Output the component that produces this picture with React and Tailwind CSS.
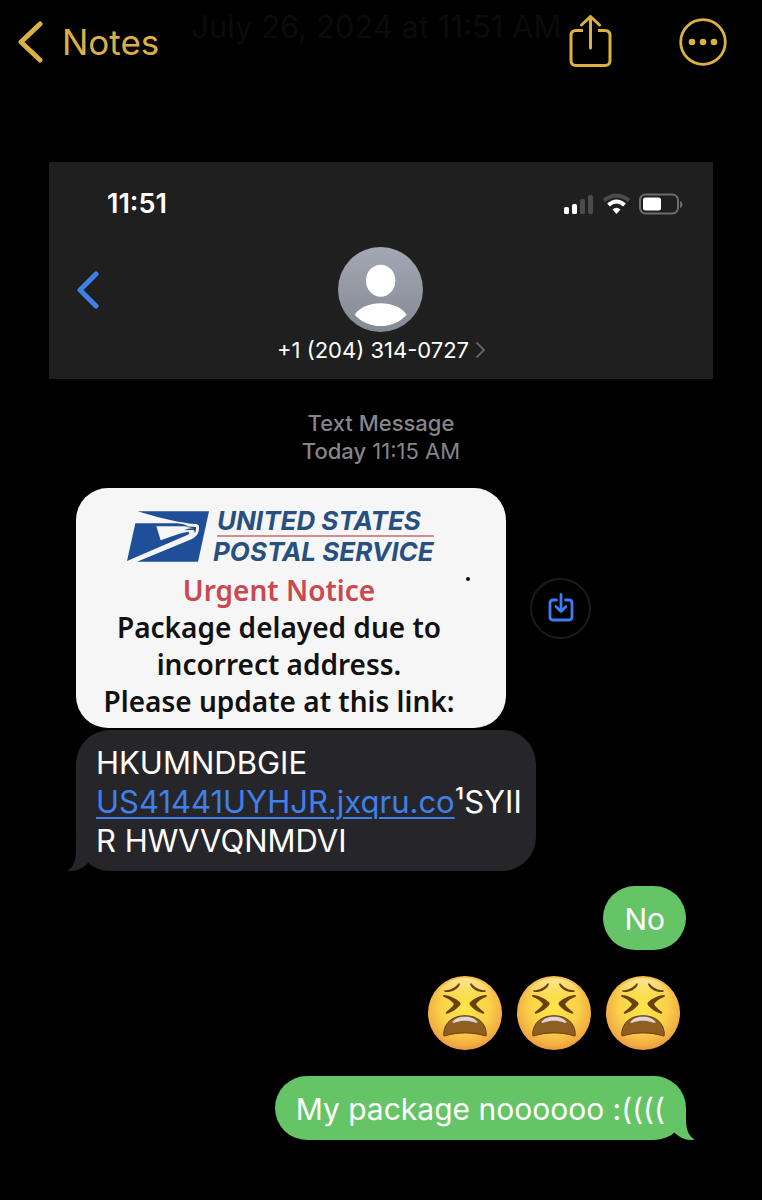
import React from "react";

function Tail({ className }) {
  return (
    <svg viewBox="0 0 30 41" className={"absolute bottom-0 h-[41px] w-[30px] " + className} aria-hidden="true">
      <path d="M9 10V20C9 31 6 38 0 40.500C8 42 15 39 20 34L30 22V10Z" fill="currentColor" />
    </svg>
  );
}

function Emoji({ id }) {
  return (
    <svg viewBox="0 0 222 222" className="size-[74px]" role="img" aria-label="tired face">
      <defs>
        <radialGradient id={id} cx="50%" cy="42%" r="60%">
          <stop offset="0" stopColor="#fbe64a" />
          <stop offset="0.55" stopColor="#fad248" />
          <stop offset="0.85" stopColor="#f2ae43" />
          <stop offset="1" stopColor="#e8943c" />
        </radialGradient>
        <linearGradient id={id + "s"} x1="0" y1="0" x2="0" y2="1">
          <stop offset="0" stopColor="#fff9d0" stopOpacity="0.6" />
          <stop offset="0.4" stopColor="#fff3a0" stopOpacity="0" />
        </linearGradient>
      </defs>
      <circle cx="111" cy="111" r="111" fill={"url(#" + id + ")"} />
      <ellipse cx="111" cy="80" rx="88" ry="74" fill={"url(#" + id + "s)"} />
      <g fill="#6b400f">
        <path d="M50 43C67 42 82 34 91 23C94 20 97 23 95 27C88 41 69 50 52 48C48 47 47 44 50 43Z" />
        <path d="M172 43C155 42 140 34 131 23C128 20 125 23 127 27C134 41 153 50 170 48C174 47 175 44 172 43Z" />
        <path d="M48 57C66 59 84 67 96 79Q100 83 96 88C86 100 72 109 57 113C53 114 52 110 55 107C66 99 74 92 78 84C70 74 60 68 48 63C44 61 44 57 48 57Z" />
        <path d="M174 57C156 59 138 67 126 79Q122 83 126 88C136 100 150 109 165 113C169 114 170 110 167 107C156 99 148 92 144 84C152 74 162 68 174 63C178 61 178 57 174 57Z" />
      </g>
      <path d="M47 176C47 142 72 119 111 119C150 119 175 142 175 176C176 180 173 181 169 179C135 168 87 168 53 179C49 181 46 180 47 176Z" fill="#8e5f20" stroke="#6b400f" strokeWidth="3" />
      <path d="M72 139C82 127 94 122 111 122C128 122 140 127 150 139C143 143 134 134 111 134C88 134 79 143 72 139Z" fill="#dcd5df" />
    </svg>
  );
}

function EagleLogo() {
  return (
    <svg viewBox="0 0 246 153" className="h-[51px] w-[82px] shrink-0" aria-hidden="true">
      <path d="M32 1H246L213 152H30L186 88Q205 80 212 69Q218 55 216 44Q213 37 190 38C135 31 85 17 32 1Z" fill="#1f4f98" />
      <path d="M25 37H150Q172 39 184 46H88L101 88Q158 66 184 62Q190 66 181 72L0 150Z" fill="#1f4f98" />
      <path d="M172 47Q190 45 207 48V54Q206 64 203 67Q204 58 199 57Q186 56 172 58Q187 49 203 53Q190 48 172 47Z" fill="#26496f" />
    </svg>
  );
}

export default function App() {
  return (
    <div className="min-h-screen bg-black pb-[60px] font-['Inter','Noto_Sans',sans-serif] text-white">
      <header className="flex h-[84px] items-center pl-4 pr-[35px] text-[#dcb144]">
        <button type="button" className="flex items-center gap-4 text-[35px] leading-[42px]">
          <svg viewBox="0 0 30 42" className="h-[42px] w-[30px]" fill="none" stroke="currentColor" strokeWidth="5" strokeLinecap="round" strokeLinejoin="round" aria-hidden="true">
            <path d="M24 3L5 21L24 39" />
          </svg>
          Notes
        </button>
        <h1 className="ml-8 flex-1 self-start whitespace-nowrap pt-1 text-[31px] leading-[46px] text-[#0b0b0b]">July 26, 2024 at 11:51 AM</h1>
        <button type="button" aria-label="Share" className="mr-[67px] shrink-0">
          <svg viewBox="0 0 44 54" className="h-[54px] w-11" fill="none" stroke="currentColor" strokeWidth="3" strokeLinecap="round" strokeLinejoin="round" aria-hidden="true">
            <path d="M15 15.500H8Q3 15.500 3 20.500V45.500Q3 50.500 8 50.500H37Q42 50.500 42 45.500V20.500Q42 15.500 37 15.500H30" strokeLinecap="butt" />
            <path d="M22.500 33V1.500M13.500 10L22.500 1.500L31.500 10" />
          </svg>
        </button>
        <button type="button" aria-label="More" className="shrink-0">
          <svg viewBox="0 0 48 48" className="size-12" aria-hidden="true">
            <circle cx="24" cy="24" r="22.300" fill="none" stroke="currentColor" strokeWidth="2.800" />
            <g fill="currentColor">
              <circle cx="13" cy="24" r="3.300" />
              <circle cx="24" cy="24" r="3.300" />
              <circle cx="35" cy="24" r="3.300" />
            </g>
          </svg>
        </button>
      </header>

      <main className="mx-[49px] mt-[78px]">
        <section className="bg-[#1f1f1f] pb-[14px] pt-6">
          <div className="flex items-center justify-between pl-[58px] pr-[30px]">
            <span className="text-[27px] font-semibold leading-9">11:51</span>
            <svg viewBox="0 0 120 24" className="h-6 w-[120px]" aria-hidden="true">
              <g fill="#fff">
                <rect x="1" y="15" width="5" height="7" rx="1.500" />
                <rect x="9" y="12" width="5" height="10" rx="1.500" />
              </g>
              <g fill="#4b4b4b">
                <rect x="17" y="7" width="5" height="15" rx="1.500" />
                <rect x="25" y="3" width="5" height="19" rx="1.500" />
              </g>
              <g fill="none" strokeWidth="4">
                <path d="M41 8.500Q53.500 -1.500 66 8.500" stroke="#4b4b4b" />
                <path d="M45.500 13Q53.500 6 61.500 13" stroke="#fff" />
              </g>
              <path d="M49.500 17.500Q53.500 14 57.500 17.500L53.500 22Z" fill="#fff" />
              <rect x="77" y="2.500" width="38" height="19" rx="5.500" fill="none" stroke="#6c6c6c" strokeWidth="2" />
              <rect x="80" y="5.500" width="18" height="13" rx="2.500" fill="#fff" />
              <path d="M117 9Q119.500 10 119.500 12.500Q119.500 15 117 16Z" fill="#6c6c6c" />
            </svg>
          </div>
          <div className="mt-[25px] grid grid-cols-[1fr_auto_1fr]">
            <button type="button" aria-label="Back" className="ml-[27px] mt-6 self-start justify-self-start text-[#3f80ea]">
              <svg viewBox="0 0 24 38" className="h-[38px] w-6" fill="none" stroke="currentColor" strokeWidth="5" strokeLinecap="round" strokeLinejoin="round" aria-hidden="true">
                <path d="M20 3L4 19L20 35" />
              </svg>
            </button>
            <button type="button" className="flex flex-col items-center gap-[3px]">
              <svg viewBox="0 0 255 255" className="size-[85px]" aria-hidden="true">
                <defs>
                  <linearGradient id="avatar" x1="0" y1="0" x2="0" y2="1">
                    <stop offset="0" stopColor="#a4a8b4" />
                    <stop offset="1" stopColor="#858993" />
                  </linearGradient>
                </defs>
                <circle cx="127.500" cy="127.500" r="127.500" fill="url(#avatar)" />
                <ellipse cx="128" cy="101" rx="44" ry="48" fill="#fff" />
                <path d="M50 203C65 181 95 169 128 169C161 169 191 181 206 203C187 224 160 237 128 237C96 237 69 224 50 203Z" fill="#fff" />
              </svg>
              <span className="flex items-center gap-[7px] text-[22px] leading-[30px]">
                +1 (204) 314-0727
                <svg viewBox="0 0 9 16" className="h-4 w-[9px]" fill="none" stroke="#636366" strokeWidth="1.800" strokeLinecap="round" strokeLinejoin="round" aria-hidden="true">
                  <path d="M1 1L8 8L1 15" />
                </svg>
              </span>
            </button>
          </div>
        </section>

        <div className="mt-[30px] text-center text-[22px] leading-7 text-[#85858a]">
          <p className="font-medium">Text Message</p>
          <p><span className="font-medium">Today</span> 11:15 AM</p>
        </div>

        <section className="flex flex-col px-[27px] pt-[23px]">
          <div className="flex items-center gap-6">
            <article className="relative h-60 w-[430px] rounded-[32px] bg-[#f6f6f6] pt-[18px] text-center">
              <div className="flex items-center gap-1 pl-[51px]">
                <EagleLogo />
                <div className="whitespace-nowrap text-left text-[26px] font-bold italic leading-[29px] text-[#275080]">
                  <p className="pl-1">UNITED STATES</p>
                  <div className="ml-1 h-[2px] bg-[#cf8f92]" />
                  <p>POSTAL SERVICE</p>
                </div>
              </div>
              <div className="mt-[6px] pr-6 font-['Noto_Sans','Open_Sans',sans-serif] text-[28px] font-semibold leading-[37px] text-[#111]">
                <p className="text-[#c9494e]">Urgent Notice</p>
                <p>Package delayed due to</p>
                <p>incorrect address.</p>
                <p>Please update at this link:</p>
              </div>
              <span className="absolute right-9 top-[89px] size-1 rounded-full bg-[#111]" />
            </article>
            <button type="button" aria-label="Save image" className="flex size-[61px] items-center justify-center rounded-full border-2 border-[#1c1c1c] text-[#3b7df2]">
              <svg viewBox="0 0 26 30" className="h-[30px] w-[26px]" fill="none" stroke="currentColor" strokeWidth="2.800" strokeLinecap="round" strokeLinejoin="round" aria-hidden="true">
                <path d="M8.500 7H5Q2 7 2 10V24Q2 27 5 27H21Q24 27 24 24V10Q24 7 21 7H17.500" />
                <path d="M13 1.500V18M8 13.500L13 18.500L18 13.500" />
              </svg>
            </button>
          </div>

          <div className="relative mt-[2px] w-[460px] rounded-[34px] bg-[#26262a] px-5 pb-[11px] pt-[13px] text-[31px] leading-[39px]">
            <Tail className="-left-[9px] text-[#26262a]" />
            <p className="relative whitespace-nowrap">
              HKUMNDBGIE
              <br />
              <a href="#" className="text-[#4080ec] underline decoration-2 underline-offset-4">US41441UYHJR.jxqru.co</a>¹SYII
              <br />
              R HWVVQNMDVI
            </p>
          </div>

          <div className="mt-[15px] self-end rounded-full bg-[#65c466] px-[21px] pb-[11px] pt-[13px] text-[30px] leading-10">No</div>

          <div className="mr-[6px] mt-[26px] flex gap-[15px] self-end">
            <Emoji id="face-a" />
            <Emoji id="face-b" />
            <Emoji id="face-c" />
          </div>

          <div className="relative mt-[26px] self-end rounded-full bg-[#65c466] px-[21px] pb-[11px] pt-[13px] text-[30px] leading-10">
            <Tail className="-right-[9px] -scale-x-100 text-[#65c466]" />
            <span className="relative">My package noooooo :((((</span>
          </div>
        </section>
      </main>
    </div>
  );
}
